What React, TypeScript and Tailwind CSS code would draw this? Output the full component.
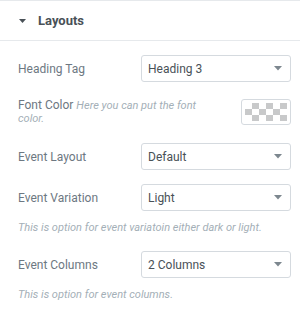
const font = { fontFamily: "Roboto, 'Liberation Sans', sans-serif" };

function Caret() {
  return (
    <svg width="8" height="5" viewBox="0 0 8 5" className="shrink-0">
      <path d="M0 0h8L4 4.5z" fill="#7d878f" />
    </svg>
  );
}

function SelectBox({ value }: { value: string }) {
  return (
    <div className="flex h-[27px] w-[150px] items-center justify-between rounded-[3px] border border-[#d5dadf] bg-white pl-[6px] pr-[8px] text-[12px] text-[#495157]">
      <span>{value}</span>
      <Caret />
    </div>
  );
}

function SelectRow({ label, value, desc }: { label: string; value: string; desc?: string }) {
  return (
    <div>
      <div className="flex items-center justify-between">
        <span className="text-[12px] text-[#6d7882]">{label}</span>
        <SelectBox value={value} />
      </div>
      {desc ? <p className="mt-[9px] text-[11px] leading-[16px] italic text-[#a4afb7]">{desc}</p> : null}
    </div>
  );
}

export default function App() {
  return (
    <div className="h-[314px] w-[300px] overflow-hidden bg-white" style={font}>
      <div className="border-t border-[#e6e9ec]">
        <div className="flex h-[40px] items-center gap-[12px] border-b border-[#e6e9ec] pl-[19px]">
          <svg width="7" height="4" viewBox="0 0 7 4">
            <path d="M0 0h7L3.5 4z" fill="#495157" />
          </svg>
          <span className="text-[13px] font-bold text-[#495157]">Layouts</span>
        </div>
        <div className="flex flex-col pl-[18px] pr-[9px] pt-[14px]">
          <SelectRow label="Heading Tag" value="Heading 3" />
          <div className="mt-[17px] flex h-[26px] items-start justify-between">
            <p className="w-[190px] text-[12px] leading-[13px] text-[#6d7882]">
              Font Color{" "}
              <span className="text-[11px] italic text-[#a4afb7]">Here you can put the font color.</span>
            </p>
            <div className="grid h-[26px] w-[50px] grid-cols-6 grid-rows-3 rounded-[3px] border border-[#d5dadf] bg-white p-[3px]">
              {Array.from({ length: 18 }).map((_, i) => (
                <span key={i} className={((i % 6) + Math.floor(i / 6)) % 2 === 1 ? "bg-[#c8c9ca]" : "bg-white"} />
              ))}
            </div>
          </div>
          <div className="mt-[18px]">
            <SelectRow label="Event Layout" value="Default" />
          </div>
          <div className="mt-[14px]">
            <SelectRow label="Event Variation" value="Light" desc="This is option for event variatoin either dark or light." />
          </div>
          <div className="mt-[15px]">
            <SelectRow label="Event Columns" value="2 Columns" desc="This is option for event columns." />
          </div>
        </div>
      </div>
    </div>
  );
}
